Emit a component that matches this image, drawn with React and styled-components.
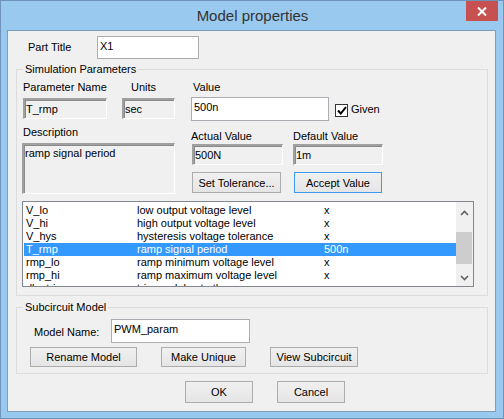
import React from 'react';
import styled, { createGlobalStyle } from 'styled-components';

const Global = createGlobalStyle`
  html, body { margin: 0; padding: 0; background: #ffffff; }
  body { font-family: "Liberation Sans", Arial, sans-serif; font-size: 11px; color: #000; }
  * { box-sizing: border-box; }
`;

const Window = styled.div`
  width: 504px;
  height: 419px;
  background: #99c9ef;
  border: 1px solid #6f94b9;
  display: flex;
  flex-direction: column;
`;

const TitleBar = styled.div`
  height: 29px;
  display: grid;
  grid-template-columns: 1fr auto 1fr;
  align-items: center;
`;

const Title = styled.div`
  grid-column: 2;
  font-family: "Liberation Sans", Arial, sans-serif;
  font-size: 15px;
  color: #333;
  padding-left: 1px;
`;

const CloseButton = styled.div`
  grid-column: 3;
  justify-self: end;
  align-self: start;
  width: 32px;
  height: 20px;
  margin-right: 5px;
  background: #c75050;
  display: flex;
  align-items: center;
  justify-content: center;
`;

const Client = styled.div`
  flex: 1;
  margin: 0 7px 6px 6px;
  border: 1px solid #7f9db9;
  background: #f0f0f0;
  display: flex;
  flex-direction: column;
  padding: 5px 7px 0 8px;
`;

const PartTitleRow = styled.div`
  display: flex;
  align-items: center;
  height: 23px;
  padding-left: 12px;
`;

const Label = styled.div`
  line-height: 13px;
  white-space: nowrap;
  width: ${p => (p.$w ? `${p.$w}px` : 'auto')};
  padding-left: ${p => p.$pl || 0}px;
  padding-top: ${p => p.$pt || 0}px;
  margin-top: ${p => p.$mt || 0}px;
  margin-left: ${p => p.$ml || 0}px;
  grid-column: ${p => p.$span || 'auto'};
`;

const TextInput = styled.div`
  width: ${p => p.$w}px;
  height: ${p => p.$h}px;
  background: #fff;
  border: 1px solid #abadb3;
  padding: 3px 0 0 2px;
  line-height: 13px;
  white-space: nowrap;
`;

const ReadBox = styled.div`
  width: ${p => (p.$w ? `${p.$w}px` : 'auto')};
  height: ${p => p.$h}px;
  margin-top: ${p => p.$mt || 0}px;
  margin-left: ${p => p.$ml || 0}px;
  grid-column: ${p => p.$span || 'auto'};
  background: #f0f0f0;
  border-style: solid;
  border-width: 2px 1px 1px 2px;
  border-color: #a0a0a0 #ffffff #ffffff #a0a0a0;
  box-shadow: inset 1px 1px 0 #8a8a8a;
  padding: ${p => (p.$top ? '2px 0 0 1px' : '0 0 0 1px')};
  display: flex;
  align-items: ${p => (p.$top ? 'flex-start' : 'center')};
  line-height: 13px;
  white-space: nowrap;
`;

const Group = styled.div`
  position: relative;
  border: 1px solid #dcdcdc;
  margin-top: ${p => p.$mt}px;
  padding: ${p => p.$pad};
`;

const Legend = styled.div`
  position: absolute;
  top: -7px;
  left: 6px;
  padding: 0 2px;
  background: #f0f0f0;
  line-height: 13px;
`;

const ParamsArea = styled.div`
  display: flex;
  gap: 16px;
`;

const LeftGrid = styled.div`
  display: grid;
  grid-template-columns: 85px 53px;
  column-gap: 15px;
  align-content: start;
`;

const RightCol = styled.div`
  display: flex;
  flex-direction: column;
`;

const ValueRow = styled.div`
  display: flex;
  align-items: flex-start;
  margin-top: 3px;
`;

const CheckBox = styled.div`
  width: 13px;
  height: 13px;
  margin: 7px 0 0 6px;
  background: #fff;
  border: 1px solid #333;
  display: flex;
  align-items: center;
  justify-content: center;
`;

const CheckLabel = styled.div`
  margin: 6px 0 0 3px;
  line-height: 13px;
`;

const ValuesGrid = styled.div`
  display: grid;
  grid-template-columns: 102px 92px;
  margin-top: 9px;
`;

const Button = styled.div`
  width: ${p => p.$w}px;
  height: ${p => p.$h || 20}px;
  margin-top: ${p => p.$mt || 0}px;
  margin-left: ${p => p.$ml || 0}px;
  background: linear-gradient(#f0f0f0, #e5e5e5);
  border: 1px solid ${p => (p.$focus ? '#3c9bf0' : '#acacac')};
  display: flex;
  align-items: center;
  justify-content: center;
  white-space: nowrap;
`;

const ListBox = styled.div`
  margin-top: 7px;
  height: 86px;
  border: 1px solid #828790;
  background: #fff;
  display: flex;
`;

const Rows = styled.div`
  flex: 1;
  overflow: hidden;
  padding: 2px 0 0 1px;
`;

const Row = styled.div`
  display: grid;
  grid-template-columns: 111px 187px 1fr;
  height: 13px;
  line-height: 13px;
  padding-left: 2px;
  white-space: nowrap;
  background: ${p => (p.$sel ? '#3399ff' : 'transparent')};
  color: ${p => (p.$sel ? '#fff' : '#000')};
`;

const ScrollBar = styled.div`
  width: 17px;
  background: #f0f0f0;
  display: flex;
  flex-direction: column;
`;

const ScrollArrow = styled.div`
  height: ${p => p.$h}px;
  display: flex;
  align-items: center;
  justify-content: center;
`;

const Track = styled.div`
  flex: 1;
  padding: 8px 1px 0 0;
`;

const Thumb = styled.div`
  height: 32px;
  background: #cdcdcd;
`;

const ModelRow = styled.div`
  display: flex;
  align-items: center;
`;

const ButtonRow = styled.div`
  display: flex;
  gap: ${p => p.$gap}px;
  margin-top: ${p => p.$mt}px;
  margin-left: ${p => p.$ml || 0}px;
`;

const Chevron = ({ up }) => (
  <svg width="9" height="6" viewBox="0 0 9 6">
    <polyline
      points={up ? '1,5 4.5,1.5 8,5' : '1,1 4.5,4.5 8,1'}
      fill="none"
      stroke="#606060"
      strokeWidth="1.6"
    />
  </svg>
);

const rows = [
  ['V_lo', 'low output voltage level', 'x'],
  ['V_hi', 'high output voltage level', 'x'],
  ['V_hys', 'hysteresis voltage tolerance', 'x'],
  ['T_rmp', 'ramp signal period', '500n'],
  ['rmp_lo', 'ramp minimum voltage level', 'x'],
  ['rmp_hi', 'ramp maximum voltage level', 'x'],
  ['dly_trig', 'trigger delay to the ramp', 'x'],
];

export default function App() {
  return (
    <>
      <Global />
      <Window>
        <TitleBar>
          <Title>Model properties</Title>
          <CloseButton>
            <svg width="10" height="9" viewBox="0 0 10 9">
              <path d="M1 0.5 L9 8.5 M9 0.5 L1 8.5" stroke="#fff" strokeWidth="2" />
            </svg>
          </CloseButton>
        </TitleBar>
        <Client>
          <PartTitleRow>
            <Label $w={69}>Part Title</Label>
            <TextInput $w={102} $h={23}>X1</TextInput>
          </PartTitleRow>

          <Group $mt={10} $pad="11px 13px 8px 5px">
            <Legend>Simulation Parameters</Legend>
            <ParamsArea>
              <LeftGrid>
                <Label $pl={1}>Parameter Name</Label>
                <Label $pl={9}>Units</Label>
                <ReadBox $h={21} $mt={4} $ml={1}>T_rmp</ReadBox>
                <ReadBox $h={21} $mt={4}>sec</ReadBox>
                <Label $span="1 / 3" $mt={7} $pl={1}>Description</Label>
                <ReadBox $span="1 / 3" $h={51} $mt={4} $top>ramp signal period</ReadBox>
              </LeftGrid>
              <RightCol>
                <Label $pl={2}>Value</Label>
                <ValueRow>
                  <TextInput $w={138} $h={24}>500n</TextInput>
                  <CheckBox>
                    <svg width="10" height="9" viewBox="0 0 10 9">
                      <path d="M1 4.5 L3.8 7.5 L9 1" fill="none" stroke="#000" strokeWidth="2" />
                    </svg>
                  </CheckBox>
                  <CheckLabel>Given</CheckLabel>
                </ValueRow>
                <ValuesGrid>
                  <Label>Actual Value</Label>
                  <Label>Default Value</Label>
                  <ReadBox $w={91} $h={21} $mt={1} $ml={1}>500N</ReadBox>
                  <ReadBox $w={90} $h={21} $mt={1}>1m</ReadBox>
                  <Button $w={89} $h={21} $mt={7} $ml={1}>Set Tolerance...</Button>
                  <Button $w={88} $h={21} $mt={7} $ml={1} $focus>Accept Value</Button>
                </ValuesGrid>
              </RightCol>
            </ParamsArea>
            <ListBox>
              <Rows>
                {rows.map(r => (
                  <Row key={r[0]} $sel={r[0] === 'T_rmp'}>
                    <span>{r[0]}</span>
                    <span>{r[1]}</span>
                    <span>{r[2]}</span>
                  </Row>
                ))}
              </Rows>
              <ScrollBar>
                <ScrollArrow $h={22}><Chevron up /></ScrollArrow>
                <Track><Thumb /></Track>
                <ScrollArrow $h={17}><Chevron /></ScrollArrow>
              </ScrollBar>
            </ListBox>
          </Group>

          <Group $mt={11} $pad="11px 13px 6px 13px">
            <Legend>Subcircuit Model</Legend>
            <ModelRow>
              <Label $w={77} $ml={4} $pt={2}>Model Name:</Label>
              <TextInput $w={139} $h={24}>PWM_param</TextInput>
            </ModelRow>
            <ButtonRow $gap={24} $mt={4}>
              <Button $w={107} $h={20}>Rename Model</Button>
              <Button $w={85} $h={20}>Make Unique</Button>
              <Button $w={88} $h={20}>View Subcircuit</Button>
            </ButtonRow>
          </Group>

          <ButtonRow $gap={24} $mt={7} $ml={169}>
            <Button $w={68} $h={22}>OK</Button>
            <Button $w={68} $h={22}>Cancel</Button>
          </ButtonRow>
        </Client>
      </Window>
    </>
  );
}
